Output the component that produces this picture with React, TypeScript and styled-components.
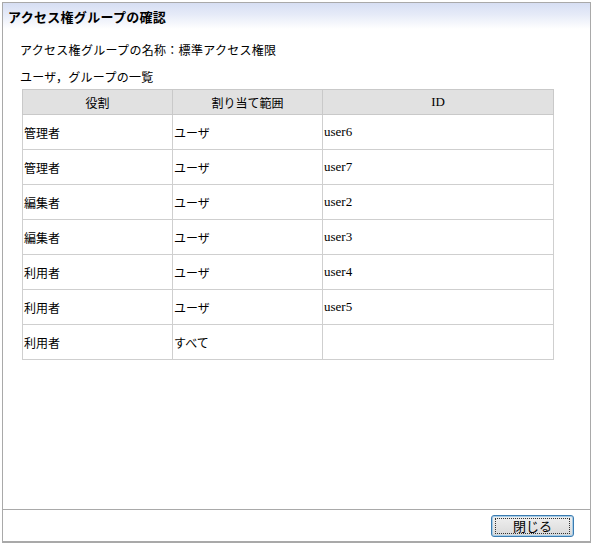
import React from 'react';
import styled, { createGlobalStyle } from 'styled-components';

const GlobalStyle = createGlobalStyle`
  html, body {
    margin: 0;
    padding: 0;
    background: #ffffff;
  }
  body {
    font-family: "Noto Sans CJK JP", "Noto Sans", sans-serif;
    color: #000;
  }
`;

const Dialog = styled.div`
  box-sizing: border-box;
  margin: 2px 0 0 2px;
  width: 589px;
  height: 541px;
  border: 1px solid #a9a9a9;
  border-bottom: 2px solid #a9a9a9;
  display: flex;
  flex-direction: column;
  background: #fff;
`;

const TitleBar = styled.div`
  height: 26px;
  padding: 0 5px;
  display: flex;
  align-items: center;
  background: linear-gradient(to bottom, #d6def3 0%, #e6ebf8 45%, #ffffff 100%);
  font-size: 13px;
  font-weight: bold;
  letter-spacing: 0.3px;
`;

const Body = styled.div`
  flex: 1;
  padding: 12px 0 0 17px;
  display: flex;
  flex-direction: column;
`;

const Line = styled.div<{ $gap?: number }>`
  font-size: 12px;
  line-height: 17px;
  height: 17px;
  letter-spacing: 0.3px;
  margin-bottom: ${(p) => p.$gap ?? 0}px;
`;

const Table = styled.table`
  border-collapse: collapse;
  margin-left: 2px;
  width: 532px;
  table-layout: fixed;
  font-size: 12px;
`;

const Th = styled.th`
  height: 24px;
  padding: 0;
  background: #e1e1e1;
  border: 1px solid #c9c9c9;
  font-weight: normal;
  text-align: center;
  font-size: 12px;
`;

const ThId = styled(Th)`
  font-family: "Liberation Serif", serif;
  font-size: 13px;
`;

const Td = styled.td<{ $serif?: boolean }>`
  height: 34px;
  padding: 0 0 0 1px;
  border: 1px solid #cfcfcf;
  vertical-align: middle;
  font-family: ${(p) => (p.$serif ? '"Liberation Serif", serif' : '"Noto Sans CJK JP", sans-serif')};
  font-size: ${(p) => (p.$serif ? '13px' : '12px')};
`;

const Footer = styled.div`
  height: 31px;
  border-top: 1px solid #a9a9a9;
  display: flex;
  align-items: center;
  justify-content: flex-end;
  padding-right: 16px;
`;

const CloseButton = styled.button`
  box-sizing: border-box;
  width: 83px;
  height: 22px;
  padding: 0;
  border: 1px solid #3b7bb0;
  border-radius: 3px;
  background: linear-gradient(to bottom, #f0f0f0, #d9d9d9);
  box-shadow: inset 0 0 0 1px #a6cde8;
  font-family: "Noto Sans CJK JP", sans-serif;
  font-size: 13px;
  color: #000;
  display: flex;
  align-items: center;
  justify-content: center;
`;

const FocusRing = styled.span`
  box-sizing: border-box;
  width: 75px;
  height: 16px;
  border: 1px dotted #333;
  display: flex;
  align-items: center;
  justify-content: center;
  line-height: 1;
`;

const rows: Array<[string, string, string]> = [
  ['管理者', 'ユーザ', 'user6'],
  ['管理者', 'ユーザ', 'user7'],
  ['編集者', 'ユーザ', 'user2'],
  ['編集者', 'ユーザ', 'user3'],
  ['利用者', 'ユーザ', 'user4'],
  ['利用者', 'ユーザ', 'user5'],
  ['利用者', 'すべて', ''],
];

export default function App() {
  return (
    <>
      <GlobalStyle />
      <Dialog>
        <TitleBar>アクセス権グループの確認</TitleBar>
        <Body>
          <Line $gap={10}>アクセス権グループの名称：標準アクセス権限</Line>
          <Line $gap={4}>ユーザ，グループの一覧</Line>
          <Table>
            <colgroup>
              <col style={{ width: 150 }} />
              <col style={{ width: 150 }} />
              <col />
            </colgroup>
            <thead>
              <tr>
                <Th>役割</Th>
                <Th>割り当て範囲</Th>
                <ThId>ID</ThId>
              </tr>
            </thead>
            <tbody>
              {rows.map((r, i) => (
                <tr key={i}>
                  <Td>{r[0]}</Td>
                  <Td>{r[1]}</Td>
                  <Td $serif>{r[2]}</Td>
                </tr>
              ))}
            </tbody>
          </Table>
        </Body>
        <Footer>
          <CloseButton>
            <FocusRing>閉じる</FocusRing>
          </CloseButton>
        </Footer>
      </Dialog>
    </>
  );
}
